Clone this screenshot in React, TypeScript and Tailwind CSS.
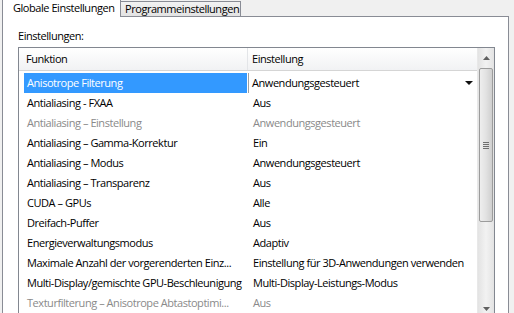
import React from "react";

type Row = { name: string; value: string; muted?: boolean };

const rows: Row[] = [
  { name: "Antialiasing - FXAA", value: "Aus" },
  { name: "Antialiasing – Einstellung", value: "Anwendungsgesteuert", muted: true },
  { name: "Antialiasing – Gamma-Korrektur", value: "Ein" },
  { name: "Antialiasing – Modus", value: "Anwendungsgesteuert" },
  { name: "Antialiasing – Transparenz", value: "Aus" },
  { name: "CUDA – GPUs", value: "Alle" },
  { name: "Dreifach-Puffer", value: "Aus" },
  { name: "Energieverwaltungsmodus", value: "Adaptiv" },
  { name: "Maximale Anzahl der vorgerenderten Einz...", value: "Einstellung für 3D-Anwendungen verwenden" },
  { name: "Multi-Display/gemischte GPU-Beschleunigung", value: "Multi-Display-Leistungs-Modus" },
  { name: "Texturfilterung – Anisotrope Abtastoptimi...", value: "Aus", muted: true },
];

function Scrollbar() {
  return (
    <div className="flex w-[17px] shrink-0 flex-col bg-gradient-to-r from-[#e3e3e3] via-[#f2f2f2] to-[#e3e3e3] border-l border-[#e8e8e8]">
      <div className="flex h-[19px] items-center justify-center">
        <svg width="7" height="4" viewBox="0 0 7 4">
          <path d="M0 4 L3.5 0 L7 4 Z" fill="#606060" />
        </svg>
      </div>
      <div className="mx-[1px] mt-[1px] flex h-[154px] items-center justify-center rounded-[2px] border border-[#9c9c9c] bg-gradient-to-r from-[#eeeeee] via-[#e2e2e2] to-[#cfcfcf]">
        <div className="flex flex-col gap-[1px]">
          <div className="h-px w-[6px] bg-[#6f6f6f]" />
          <div className="h-px w-[6px] bg-[#6f6f6f]" />
          <div className="h-px w-[6px] bg-[#6f6f6f]" />
          <div className="h-px w-[6px] bg-[#6f6f6f]" />
        </div>
      </div>
      <div className="flex-1" />
      <div className="flex h-[12px] items-end justify-center pb-[2px]">
        <svg width="7" height="4" viewBox="0 0 7 4">
          <path d="M0 0 L3.5 4 L7 0 Z" fill="#606060" />
        </svg>
      </div>
    </div>
  );
}

export default function App() {
  return (
    <div
      className="flex h-[313px] w-[514px] flex-col overflow-hidden bg-[#f0f0f0] text-[11px] tracking-[-0.45px] text-black"
      style={{ fontFamily: '"Open Sans", "Noto Sans", sans-serif' }}
    >
      {/* tabs */}
      <div className="relative z-10 flex h-[17px] items-start pl-[2px]">
        <div className="flex h-[17px] w-[119px] items-center whitespace-nowrap border-x border-[#898c95] bg-white pl-[10px]">
          Globale Einstellungen
        </div>
        <div className="mt-[1px] flex h-[16px] w-[120px] items-center whitespace-nowrap border-y border-r border-[#898c95] bg-gradient-to-b from-[#f2f2f2] to-[#e3e3e3] pl-[4px]">
          Programmeinstellungen
        </div>
      </div>

      {/* panel */}
      <div className="-mt-px ml-[2px] mr-[5px] flex flex-1 flex-col border border-[#898c95] bg-white pl-[15px] pr-[13px]">
        <div className="flex h-[30px] items-end pb-[3px]">Einstellungen:</div>

        <div className="flex flex-1 min-w-0 border border-[#828790] bg-white">
          <div className="flex min-w-0 flex-1 flex-col overflow-hidden">
            {/* header */}
            <div className="flex h-[23px] border-b border-[#d5d5d5] bg-gradient-to-b from-white to-[#f1f2f4]">
              <div className="flex w-[229px] shrink-0 items-center border-r border-[#e3e5e8] pl-[7px]">Funktion</div>
              <div className="flex flex-1 items-center pl-[4px]">Einstellung</div>
            </div>

            {/* selected row */}
            <div className="mt-[2px] flex h-[20px]">
              <div className="ml-[5px] flex w-[223px] shrink-0 items-center bg-[#3399ff] pl-[3px] text-white">
                Anisotrope Filterung
              </div>
              <div className="ml-[1px] flex min-w-0 flex-1 items-center justify-between border-l border-[#a0a0a0] bg-white pl-[3px] pr-[4px]">
                <span>Anwendungsgesteuert</span>
                <svg width="8" height="4" viewBox="0 0 8 4">
                  <path d="M0 0 L4 4 L8 0 Z" fill="#111111" />
                </svg>
              </div>
            </div>

            {rows.map((r) => (
              <div
                key={r.name}
                className={`flex h-[20px] items-center ${r.muted ? "text-[#8a8a8a]" : "text-black"}`}
              >
                <div className="w-[229px] shrink-0 overflow-hidden whitespace-nowrap pl-[8px]">{r.name}</div>
                <div className="min-w-0 flex-1 whitespace-nowrap pl-[5px]">{r.value}</div>
              </div>
            ))}
          </div>
          <Scrollbar />
        </div>
      </div>
    </div>
  );
}
